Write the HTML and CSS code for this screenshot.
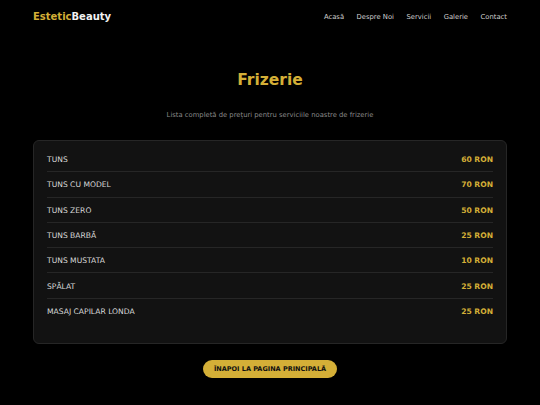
FILE: index.html
```html
<!DOCTYPE html>
<html lang="ro">
<head>
<meta charset="utf-8">
<title>Frizerie - EsteticBeauty</title>
<link rel="stylesheet" href="styles.css">
</head>
<body>
<header class="header">
  <div class="logo"><span class="logo-gold">Estetic</span>Beauty</div>
  <nav class="nav">
    <a href="#">Acasă</a>
    <a href="#">Despre Noi</a>
    <a href="#">Servicii</a>
    <a href="#">Galerie</a>
    <a href="#">Contact</a>
  </nav>
</header>
<main class="main">
  <h1 class="title">Frizerie</h1>
  <p class="subtitle">Lista completă de prețuri pentru serviciile noastre de frizerie</p>
  <div class="card">
    <div class="row"><span class="name">TUNS</span><span class="price">60 RON</span></div>
    <div class="row"><span class="name">TUNS CU MODEL</span><span class="price">70 RON</span></div>
    <div class="row"><span class="name">TUNS ZERO</span><span class="price">50 RON</span></div>
    <div class="row"><span class="name">TUNS BARBĂ</span><span class="price">25 RON</span></div>
    <div class="row"><span class="name">TUNS MUSTATA</span><span class="price">10 RON</span></div>
    <div class="row"><span class="name">SPĂLAT</span><span class="price">25 RON</span></div>
    <div class="row"><span class="name">MASAJ CAPILAR LONDA</span><span class="price">25 RON</span></div>
  </div>
  <div class="actions"><a class="btn" href="#">ÎNAPOI LA PAGINA PRINCIPALĂ</a></div>
</main>
</body>
</html>
```
FILE: styles.css
```css
* { box-sizing: border-box; }
html, body { margin: 0; padding: 0; }
body {
  background: #000;
  color: #e0e0e0;
  font-family: "DejaVu Sans", Verdana, sans-serif;
  width: 540px;
  height: 405px;
  overflow: hidden;
}
.header {
  display: flex;
  justify-content: space-between;
  align-items: center;
  padding: 0 33px;
  height: 33px;
}
.logo {
  font-size: 10px;
  font-weight: bold;
  color: #f2f2f2;
}
.logo-gold { color: #d4af37; }
.nav {
  display: flex;
  gap: 12.5px;
}
.nav a {
  color: #cfcfcf;
  text-decoration: none;
  font-size: 6.8px;
}
.main {
  padding: 0 33px;
}
.title {
  margin: 37px 0 0;
  text-align: center;
  font-size: 15.5px;
  line-height: 20px;
  font-weight: bold;
  color: #d4af37;
}
.subtitle {
  margin: 20px 0 0;
  text-align: center;
  font-size: 6.8px;
  line-height: 10px;
  color: #8a8a8a;
}
.card {
  margin-top: 20px;
  background: #121212;
  border: 1px solid #262626;
  border-radius: 6px;
  padding: 6px 13px 19px;
}
.row {
  display: flex;
  justify-content: space-between;
  align-items: center;
  height: 25.3px;
  padding-top: 1px;
  border-bottom: 1px solid #262626;
  font-size: 7.6px;
}
.row:last-child { border-bottom: none; }
.name { color: #d8d8d8; }
.price { color: #d4af37; font-weight: bold; }
.actions {
  display: flex;
  justify-content: center;
  margin-top: 16px;
}
.btn {
  display: inline-block;
  background: #d4af37;
  color: #111;
  text-decoration: none;
  font-weight: bold;
  font-size: 6.5px;
  line-height: 18px;
  padding: 0 10.5px;
  border-radius: 10px;
}
```
